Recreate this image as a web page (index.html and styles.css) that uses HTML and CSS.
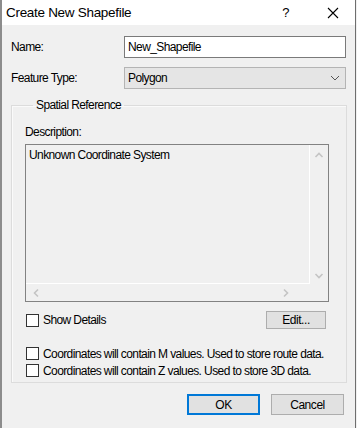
FILE: index.html
```html
<!DOCTYPE html>
<html lang="en">
<head>
    <meta charset="UTF-8">
    <title>Create New Shapefile</title>
    <link rel="stylesheet" href="styles.css">
</head>
<body>
    <div class="dialog">
        <div class="titlebar">
            <span class="title">Create New Shapefile</span>
            <span class="help">?</span>
            <svg class="close" width="12" height="12" viewBox="0 0 12 12">
                <path d="M1 1 L11 11 M11 1 L1 11" stroke="#000" stroke-width="1.1" fill="none"/>
            </svg>
        </div>
        <div class="content">
            <div class="row">
                <label class="label">Name:</label>
                <div class="input">New_Shapefile</div>
            </div>
            <div class="row">
                <label class="label">Feature Type:</label>
                <div class="select">
                    <span>Polygon</span>
                    <svg width="10" height="6" viewBox="0 0 10 6">
                        <path d="M1 1 L5 5 L9 1" stroke="#555" stroke-width="1" fill="none"/>
                    </svg>
                </div>
            </div>
            <fieldset class="group">
                <legend>Spatial Reference</legend>
                <div class="desc-label">Description:</div>
                <div class="desc">
                    <div class="desc-text">Unknown Coordinate System</div>
                    <div class="vscroll">
                        <svg width="10" height="6" viewBox="0 0 10 6"><path d="M1.5 5 L5 1.5 L8.5 5" stroke="#c4c4c4" stroke-width="1.6" fill="none"/></svg>
                        <svg width="10" height="6" viewBox="0 0 10 6"><path d="M1.5 1 L5 4.5 L8.5 1" stroke="#c4c4c4" stroke-width="1.6" fill="none"/></svg>
                    </div>
                    <div class="hscroll">
                        <svg width="6" height="10" viewBox="0 0 6 10"><path d="M5 1.5 L1.5 5 L5 8.5" stroke="#c4c4c4" stroke-width="1.6" fill="none"/></svg>
                        <svg width="6" height="10" viewBox="0 0 6 10"><path d="M1 1.5 L4.5 5 L1 8.5" stroke="#c4c4c4" stroke-width="1.6" fill="none"/></svg>
                    </div>
                    <div class="corner"></div>
                </div>
                <div class="details-row">
                    <label class="check"><span class="box"></span>Show Details</label>
                    <button class="btn edit">Edit...</button>
                </div>
                <label class="check m-row"><span class="box"></span>Coordinates will contain M values. Used to store route data.</label>
                <label class="check z-row"><span class="box"></span>Coordinates will contain Z values. Used to store 3D data.</label>
            </fieldset>
            <div class="buttons">
                <button class="btn ok">OK</button>
                <button class="btn">Cancel</button>
            </div>
        </div>
    </div>
</body>
</html>
```

FILE: styles.css
```css
* {
    margin: 0;
    padding: 0;
    box-sizing: border-box;
}
body {
    font-family: 'Liberation Sans', Arial, sans-serif;
    font-size: 12px;
    letter-spacing: -0.6px;
    color: #000;
    background: #f0f0f0;
    width: 357px;
    height: 428px;
    overflow: hidden;
}
.dialog {
    width: 356px;
    height: 428px;
    background: #f0f0f0;
    border-left: 2px solid #8c8c8c;
    border-right: 1px solid #6e6e6e;
}
.titlebar {
    height: 25px;
    background: #fff;
    display: flex;
    align-items: center;
    padding-left: 4px;
}
.title {
    font-size: 13.5px;
    letter-spacing: -0.3px;
    flex: 1;
}
.help {
    font-size: 13px;
    margin-right: 38px;
}
.close {
    margin-right: 16px;
}
.content {
    padding: 11px 9px 0 9px;
}
.row {
    display: flex;
    align-items: center;
    height: 22px;
    margin-bottom: 9px;
}
.label {
    width: 113px;
}
.input {
    width: 222px;
    height: 22px;
    background: #fff;
    border: 1px solid #7a7a7a;
    padding: 2px 3px;
    line-height: 16px;
}
.select {
    width: 222px;
    height: 22px;
    background: #e5e5e5;
    border: 1px solid #b4b4b4;
    display: flex;
    align-items: center;
    justify-content: space-between;
    padding: 0 5px 0 3px;
}
.group {
    margin-top: 3px;
    border: 1px solid #dcdcdc;
    box-shadow: inset 1px 1px 0 #fafafa;
    padding: 13px 17px 10px 13px;
    height: 285px;
}
.group legend {
    margin-left: 8px;
    padding: 0 3px;
    line-height: 14px;
}
.desc-label {
    line-height: 14px;
    margin-bottom: 5px;
}
.desc {
    width: 304px;
    height: 158px;
    border: 1px solid #828282;
    display: grid;
    grid-template-columns: 1fr 18px;
    grid-template-rows: 1fr 17px;
}
.desc-text {
    border-right: 1px solid #fff;
    border-bottom: 1px solid #fff;
    padding: 3px 3px;
    line-height: 14px;
}
.vscroll {
    display: flex;
    flex-direction: column;
    justify-content: space-between;
    align-items: center;
    padding: 7px 0 5px 0;
}
.hscroll {
    display: flex;
    justify-content: space-between;
    align-items: center;
    padding: 0 21px 0 7px;
}
.details-row {
    display: flex;
    justify-content: space-between;
    align-items: center;
    margin-top: 9px;
    height: 18px;
    margin-bottom: 16px;
}
.check {
    display: flex;
    align-items: center;
    height: 17px;
    white-space: nowrap;
}
.box {
    width: 13px;
    height: 13px;
    border: 1px solid #333;
    background: #fff;
    margin-left: 1px;
    margin-right: 4px;
    flex-shrink: 0;
}
.btn {
    font-family: 'Liberation Sans', Arial, sans-serif;
    font-size: 12px;
    letter-spacing: -0.45px;
    background: #e1e1e1;
    border: 1px solid #adadad;
    color: #000;
    width: 73px;
    height: 21px;
}
.edit {
    width: 60px;
    height: 18px;
    margin-right: 3px;
}
.ok {
    border: 2px solid #0078d7;
}
.buttons {
    display: flex;
    justify-content: flex-end;
    gap: 11px;
    margin-top: 11px;
    padding-right: 2px;
}
```
